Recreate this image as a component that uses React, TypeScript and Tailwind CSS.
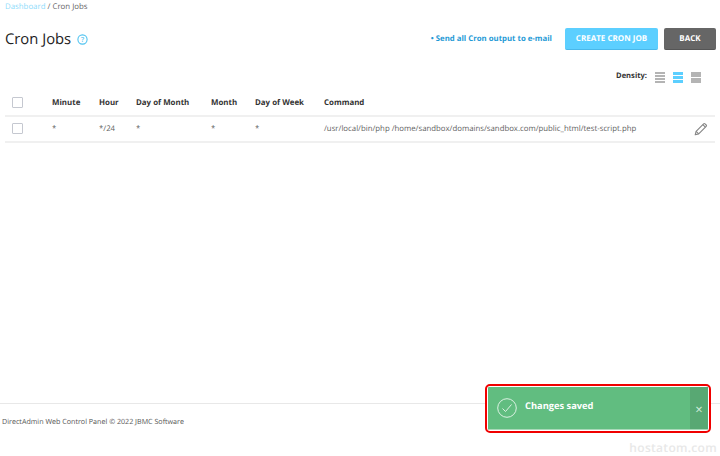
import React from "react";

const cols = ["w-[47px]", "w-[37px]", "w-[75px]", "w-[44px]", "w-[69px]", "flex-1"];
const head = ["Minute", "Hour", "Day of Month", "Month", "Day of Week", "Command"];
const vals = ["*", "*/24", "*", "*", "*", "/usr/local/bin/php /home/sandbox/domains/sandbox.com/public_html/test-script.php"];

function Box() {
  return <div className="w-[47px] shrink-0 pl-[7px] mt-[-1px]"><div className="w-[9px] h-[9px] box-content border border-[#c5c8d0] rounded-[1px] bg-white" /></div>;
}

function Density({ color, rows }: { color: string; rows: number }) {
  const h = rows === 4 ? "h-[2px]" : rows === 3 ? "h-[3px]" : "h-[5px]";
  return (
    <div className="w-[10px] h-[11px] flex flex-col justify-between">
      {Array.from({ length: rows }).map((_, i) => <div key={i} className={`${h} w-full ${color}`} />)}
    </div>
  );
}

export default function App() {
  return (
    <div className="relative w-[720px] h-[456px] overflow-hidden bg-white flex flex-col font-['Open_Sans',sans-serif] text-[#4a4a4f] [text-rendering:geometricPrecision]">
      <div className="flex-1 px-[5px]">
        <div className="h-[15px] text-[7.85px] leading-[15px] text-[#666]">
          <span className="text-[#8fdcfb]">Dashboard</span> / Cron Jobs
        </div>
        <div className="h-[22px] mt-[13px] flex items-center">
          <h1 className="text-[14.8px] font-normal text-[#222]">Cron Jobs</h1>
          <svg className="ml-[6px] mt-[1px]" width="11" height="11" viewBox="0 0 11 11" fill="none">
            <circle cx="5.5" cy="5.5" r="4.6" stroke="#4fc3f0" strokeWidth="1.1" />
            <text x="5.5" y="8" textAnchor="middle" fontSize="7" fontWeight="600" fill="#4fc3f0">?</text>
          </svg>
          <div className="ml-auto flex items-center mr-[-1px]">
            <span className="text-[7.8px] font-bold text-[#1f9ad6] pt-[1px]">• Send all Cron output to e-mail</span>
            <div className="ml-[13px] w-[93px] h-[22px] rounded-[2px] bg-[#5ccfff] border-b border-[#4ab8ea] text-white text-[8px] font-bold flex items-center justify-center">CREATE CRON JOB</div>
            <div className="ml-[6px] w-[52px] h-[22px] rounded-[2px] bg-[#666666] border-b border-[#555] text-white text-[8px] font-bold flex items-center justify-center">BACK</div>
          </div>
        </div>
        <div className="h-[18px] mt-[18px] flex items-center justify-end pr-[14px] gap-[8px]">
          <span className="text-[7.6px] font-bold text-[#333]">Density:</span>
          <Density color="bg-[#b4b4b4]" rows={4} />
          <Density color="bg-[#5ccfff]" rows={3} />
          <Density color="bg-[#b4b4b4]" rows={2} />
        </div>
        <div className="h-[24px] mt-[5px] flex items-center text-[7.9px] font-bold text-[#333] border-b-2 border-[#f0f0f0] box-content">
          <Box />
          {head.map((t, i) => <div key={t} className={`${cols[i]} shrink-0 pt-[1px]`}>{t}</div>)}
        </div>
        <div className="h-[24px] flex items-center text-[7.8px] text-[#5f5f5f] border-b-2 border-[#f0f0f0] box-content">
          <Box />
          {vals.map((t, i) => <div key={i} className={`${cols[i]} pt-[1px] ${i === 5 ? "" : "shrink-0"}`}>{t}</div>)}
          <svg className="mr-[7px]" width="14" height="14" viewBox="0 0 14 14" fill="none" stroke="#858585" strokeWidth="1.1" strokeLinejoin="round">
            <path d="M1.2 12.8l.9-3.5 7.5-7.5a1 1 0 0 1 1.4 0l1.2 1.2a1 1 0 0 1 0 1.4l-7.5 7.5z" />
            <path d="M2.1 9.3l2.6 2.6M8.8 2.6l2.6 2.6" />
          </svg>
        </div>
      </div>
      <div className="h-[37px] mb-[16px] border-t border-[#e8e8e8] flex items-center px-[2px] text-[7.15px] text-[#555]">
        DirectAdmin Web Control Panel © 2022 JBMC Software
      </div>
      <div className="absolute left-[485px] top-[384px] w-[226px] h-[49px] border-2 border-[#f00000] rounded-[5px] bg-white p-[1px]">
        <div className="w-full h-full bg-[#61bd80] rounded-[1px] flex text-white border-b border-[#a9d9b9]">
          <svg className="ml-[9px] mt-[11px]" width="20" height="20" viewBox="0 0 20 20" fill="none" stroke="#eaf7ee" strokeWidth="0.9">
            <circle cx="10" cy="10" r="9.3" />
            <path d="M5.5 10.5l3 3 6-7" />
          </svg>
          <span className="ml-[8px] mt-[12px] text-[9.3px] leading-[13px] font-bold flex-1">Changes saved</span>
          <div className="w-[18px] bg-[#58a873] flex items-center justify-center text-[#d5ecdc] text-[13px] leading-none pt-[2px]">×</div>
        </div>
      </div>
      <div className="absolute right-[3px] bottom-[1px] text-[12px] leading-[14px] font-semibold text-[#e8e8e8] tracking-[0.3px]">hostatom.com</div>
    </div>
  );
}
